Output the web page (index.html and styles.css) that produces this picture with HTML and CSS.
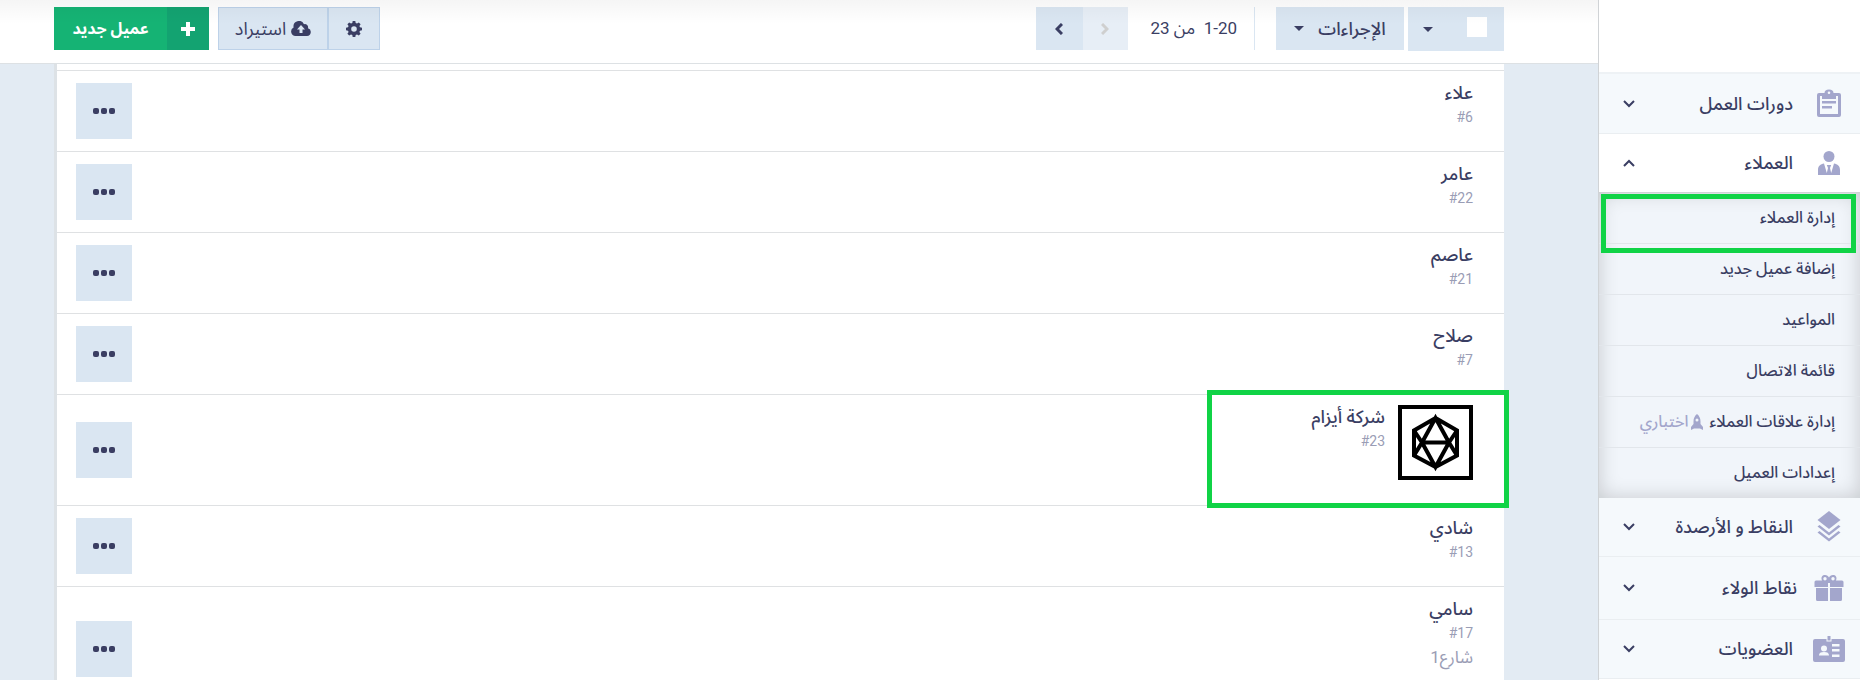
FILE: index.html
```
<!DOCTYPE html>
<html lang="ar" dir="rtl">
<head>
  <meta charset="UTF-8">
  <meta name="viewport" content="width=device-width, initial-scale=1">
  <title>إدارة العملاء</title>
  <link rel="stylesheet" href="styles.css">
</head>
<body>

  <div class="app">

    <nav class="sidebar">
      <a class="menu-item" href="#">
        <svg class="menu-icon" viewBox="0 0 32 32"><path fill-rule="evenodd" d="M6 5h5.500a4.500 3.600 0 0 1 9 0H26a2 2 0 0 1 2 2v20a2 2 0 0 1-2 2H6a2 2 0 0 1-2-2V7a2 2 0 0 1 2-2zm1 3v18h18V8h-2v3H9V8zm9-4.500a1.300 1.300 0 1 0 0 2.600 1.300 1.300 0 0 0 0-2.600zM9 13h14v2.500H9zm0 5h10v2.500H9z"/></svg>
        <span>دورات العمل</span>
        <svg class="chevron" viewBox="0 0 12 8"><path d="M1 1l5 5 5-5"/></svg>
      </a>
      <a class="menu-item open" href="#">
        <svg class="menu-icon" viewBox="0 0 32 32"><circle cx="16" cy="9.500" r="5.500"/><path d="M5 28v-5c0-4 2.500-6 6-6.500l2.800 9.500 1.200-5-1.200-3h4.400l-1.200 3 1.200 5 2.800-9.500c3.500.5 6 2.500 6 6.500v5z"/></svg>
        <span>العملاء</span>
        <svg class="chevron" viewBox="0 0 12 8"><path d="M1 7l5-5 5 5"/></svg>
      </a>
      <div class="submenu">
        <a class="highlight" href="#">إدارة العملاء</a>
        <a href="#">إضافة عميل جديد</a>
        <a href="#">المواعيد</a>
        <a href="#">قائمة الاتصال</a>
        <a href="#">إدارة علاقات العملاء
          <span class="beta"><svg viewBox="0 0 12 16"><path fill-rule="evenodd" d="M6 0c2.500 2 3.500 4.500 3.500 7.500V10l2.500 3v3l-3-1.500H3L0 16v-3l2.500-3V7.500C2.500 4.500 3.500 2 6 0zm0 4.500a1.500 1.500 0 1 0 0 3 1.500 1.500 0 0 0 0-3z"/></svg>اختباري</span>
        </a>
        <a href="#">إعدادات العميل</a>
      </div>
      <a class="menu-item" href="#">
        <svg class="menu-icon" viewBox="0 0 32 32"><path d="M16 0l11.500 9L16 18 4.500 9z"/><path d="M4.500 15.500l2-1.500 9.500 7.500 9.500-7.500 2 1.500L16 24.500z"/><path d="M4.500 21.500l2-1.500 9.500 7.500 9.500-7.500 2 1.500L16 30.500z"/></svg>
        <span>النقاط و الأرصدة</span>
        <svg class="chevron" viewBox="0 0 12 8"><path d="M1 1l5 5 5-5"/></svg>
      </a>
      <a class="menu-item tall" href="#">
        <svg class="menu-icon" viewBox="0 0 32 32"><path fill-rule="evenodd" d="M9 8.500C7.500 5 9.500 3 12 3c2 0 3.200 1 4 2.500C16.800 4 18 3 20 3c2.500 0 4.500 2 3 5.500h6a1.500 1.500 0 0 1 1.500 1.500v5h-29v-5A1.500 1.500 0 0 1 3 8.500zM12 5a1.700 1.700 0 1 0 0 3.400A1.700 1.700 0 0 0 12 5zm8 0a1.700 1.700 0 1 0 0 3.400A1.700 1.700 0 0 0 20 5z"/><path d="M3 16h12v13H4.500A1.500 1.500 0 0 1 3 27.500zM17 16h12v11.500a1.500 1.500 0 0 1-1.500 1.500H17z"/><path class="ribbon" d="M15 11h2v18h-2z"/></svg>
        <span>نقاط الولاء</span>
        <svg class="chevron" viewBox="0 0 12 8"><path d="M1 1l5 5 5-5"/></svg>
      </a>
      <a class="menu-item" href="#">
        <svg class="menu-icon" viewBox="0 0 32 32"><path fill-rule="evenodd" d="M2 6h11.500v2.500h5V6H30a2 2 0 0 1 2 2v19a2 2 0 0 1-2 2H2a2 2 0 0 1-2-2V8a2 2 0 0 1 2-2zm9 6.500a3 3 0 1 0 0 6 3 3 0 0 0 0-6zM6 22.500h10c0-2.500-1.500-3.500-5-3.500s-5 1-5 3.500zM19 11v2.500h7.500V11zm0 5v2.500h7.500V16zm0 5.500V24h7.500v-2.500z"/><path d="M14.500 3h3v4.500h-3z"/></svg>
        <span>العضويات</span>
        <svg class="chevron" viewBox="0 0 12 8"><path d="M1 1l5 5 5-5"/></svg>
      </a>
    </nav>

    <main class="main">
      <header class="toolbar">
        <div class="select-all">
          <input type="checkbox" aria-label="تحديد الكل">
          <button class="caret-btn" aria-label="خيارات التحديد"><span class="caret"></span></button>
        </div>
        <button class="btn actions">الإجراءات <span class="caret"></span></button>
        <div class="paging">
          <span class="range">1-20 &nbsp;من 23</span>
          <button class="page-btn prev" disabled aria-label="السابق"><svg viewBox="0 0 8 12"><path d="M1 1l5 5-5 5"/></svg></button>
          <button class="page-btn next" aria-label="التالي"><svg viewBox="0 0 8 12"><path d="M7 1L2 6l5 5"/></svg></button>
        </div>
        <div class="tools">
          <button class="btn settings" aria-label="الإعدادات"><svg viewBox="0 0 16 16"><path fill-rule="evenodd" d="M6.700 0h2.600l.4 2 1.300.6L12.800 1.400l1.800 1.800L13.400 5l.6 1.300 2 .4v2.600l-2 .4-.6 1.300 1.200 1.800-1.800 1.800-1.800-1.200-1.300.6-.4 2H6.700l-.4-2L5 13.400l-1.800 1.200-1.800-1.800L2.600 11 2 9.700l-2-.4V6.700l2-.4L2.600 5 1.400 3.200l1.800-1.800L5 2.600 6.300 2zM8 5.200a2.800 2.800 0 1 0 0 5.600 2.800 2.800 0 0 0 0-5.600z"/></svg></button>
          <button class="btn import"><svg viewBox="0 0 20 15"><path fill-rule="evenodd" d="M4.500 15A4.500 4.500 0 0 1 2.600 6.500 5.500 5.500 0 0 1 13 3.200a3.300 3.300 0 0 1 4 4A4 4 0 0 1 16 15zM8.500 12h3V8.500H14l-4-4.500-4 4.500h2.500z"/></svg>استيراد</button>
        </div>
        <button class="add-btn"><span class="plus"><svg viewBox="0 0 14 14"><path d="M5 0h4v5h5v4H9v5H5V9H0V5h5z"/></svg></span><span class="label">عميل جديد</span></button>
      </header>

      <section class="content">
        <ul class="clients">
          <li class="client">
            <div class="info"><a href="#">علاء</a><small dir="ltr">#6</small></div>
            <button class="more" aria-label="المزيد"><i></i><i></i><i></i></button>
          </li>
          <li class="client">
            <div class="info"><a href="#">عامر</a><small dir="ltr">#22</small></div>
            <button class="more" aria-label="المزيد"><i></i><i></i><i></i></button>
          </li>
          <li class="client">
            <div class="info"><a href="#">عاصم</a><small dir="ltr">#21</small></div>
            <button class="more" aria-label="المزيد"><i></i><i></i><i></i></button>
          </li>
          <li class="client">
            <div class="info"><a href="#">صلاح</a><small dir="ltr">#7</small></div>
            <button class="more" aria-label="المزيد"><i></i><i></i><i></i></button>
          </li>
          <li class="client company">
            <svg class="logo" viewBox="0 0 75 75"><rect x="2" y="2" width="71" height="71"/><path d="M37.500 13L59 25.500v25L37.500 62 16 50.500v-25zM37.500 13L24 37.500 37.500 62 51 37.500zM24 37.500h27M16 25.500l8 12-8 13M59 25.500l-8 12 8 13"/></svg>
            <div class="info"><a href="#">شركة أيزام</a><small dir="ltr">#23</small></div>
            <button class="more" aria-label="المزيد"><i></i><i></i><i></i></button>
          </li>
          <li class="client">
            <div class="info"><a href="#">شادي</a><small dir="ltr">#13</small></div>
            <button class="more" aria-label="المزيد"><i></i><i></i><i></i></button>
          </li>
          <li class="client with-address">
            <div class="info"><a href="#">سامي</a><small dir="ltr">#17</small><address>شارع1</address></div>
            <button class="more" aria-label="المزيد"><i></i><i></i><i></i></button>
          </li>
        </ul>
      </section>
    </main>

  </div>

</body>
</html>
```
FILE: styles.css
```
*,
*::before,
*::after {
  box-sizing: border-box;
}

body {
  margin: 0;
  font-family: Roboto, "Noto Sans Arabic", "Noto Sans", "DejaVu Sans", sans-serif;
  font-size: 18px;
  color: #3a3e63;
  background: #e3ebf3;
}

a {
  color: inherit;
  text-decoration: none;
}

button {
  font: inherit;
  color: inherit;
  border: 0;
  padding: 0;
  cursor: pointer;
}

svg {
  flex: none;
  fill: currentColor;
}

.app {
  display: flex;
  height: 100vh;
  overflow: hidden;
}

/* sidebar */
.sidebar {
  position: relative;
  z-index: 2;
  flex: none;
  width: 262px;
  padding-top: 72px;
  background: #fff;
  border-left: 1px solid #d0d3d6;
  font-weight: 500;
}

.menu-item {
  display: flex;
  align-items: center;
  gap: 20px;
  height: 59px;
  padding: 0 15px 0 24px;
  background: #f5f9fc;
  border-bottom: 1px solid #eaeef1;
}

.menu-item:first-child {
  height: 62px;
  border-top: 2px solid #eef2f5;
}

.menu-item.tall {
  height: 63px;
  gap: 16px;
}

.menu-item.open {
  background: #fff;
  border-bottom-color: #d0d3d6;
}

.menu-icon {
  width: 32px;
  height: 32px;
  color: #a3a6cc;
}

.ribbon {
  fill: #f5f9fc;
}

.chevron {
  width: 12px;
  height: 8px;
  margin-right: auto;
  fill: none;
  stroke: #3a3e63;
  stroke-width: 2;
}

.submenu {
  background: #f1f5fa;
  box-shadow: inset 0 0 20px rgba(0, 0, 0, 0.18);
}

.submenu a {
  position: relative;
  display: flex;
  align-items: center;
  height: 51px;
  padding-right: 25px;
  border-bottom: 1px solid #e2e6eb;
  font-size: 16px;
}

.submenu a:last-child {
  height: 50px;
  border-bottom: 0;
}

.beta {
  display: flex;
  align-items: center;
  margin-right: 7px;
  gap: 2px;
  color: #a3a6cc;
}

.beta svg {
  width: 12px;
  height: 16px;
}

.submenu .highlight::after {
  content: "";
  position: absolute;
  z-index: 1;
  inset: 1px 4px -10px 2px;
  border: 5px solid #10d346;
}

/* toolbar */
.main {
  flex: 1;
  min-width: 0;
  display: flex;
  flex-direction: column;
}

.toolbar {
  position: relative;
  display: flex;
  align-items: flex-start;
  height: 64px;
  padding: 7px 94px 0 54px;
  background: #fff;
  border-bottom: 1px solid #dde1e4;
}

.toolbar::before {
  content: "";
  position: absolute;
  inset: 0 0 auto;
  height: 24px;
  background: linear-gradient(rgba(0, 0, 0, 0.04), rgba(0, 0, 0, 0));
  pointer-events: none;
}

.select-all,
.btn,
.page-btn {
  display: flex;
  align-items: center;
  justify-content: center;
  height: 43px;
  background: #dae6f2;
}

.select-all {
  width: 96px;
  height: 44px;
  padding: 0 17px 0 5px;
  justify-content: space-between;
}

.select-all input {
  appearance: none;
  width: 20px;
  height: 20px;
  margin: 0 0 4px;
  background: #fff;
}

.caret-btn {
  padding: 10px;
  background: none;
}

.caret {
  display: block;
  border: 5px solid transparent;
  border-top-color: #3a3e63;
  border-bottom: 0;
}

.actions {
  width: 128px;
  margin-right: 4px;
  gap: 14px;
  font-weight: 500;
}

.paging {
  display: flex;
  align-items: center;
  height: 43px;
  margin-right: 21px;
  border-right: 1px solid #dae6f2;
}

.range {
  margin: 0 17px 0 23px;
  font-size: 17px;
}

.page-btn {
  width: 47px;
}

.page-btn svg {
  width: 8px;
  height: 12px;
  fill: none;
  stroke: currentColor;
  stroke-width: 3;
}

.page-btn.prev {
  width: 45px;
  color: #cfcfcf;
  background: #e7eef6;
}

.tools {
  display: flex;
  margin-right: auto;
}

.tools .btn {
  border: 1px solid #bdd2e9;
}

.settings {
  width: 52px;
}

.settings svg {
  width: 16px;
  height: 16px;
}

.import {
  width: 110px;
  gap: 5px;
}

.import svg {
  width: 20px;
  height: 15px;
}

.add-btn {
  display: flex;
  width: 155px;
  height: 43px;
  margin-right: 9px;
  background: #15b374;
  color: #fff;
  font-size: 16px;
  font-weight: bold;
}

.plus {
  display: flex;
  align-items: center;
  justify-content: center;
  width: 42px;
  height: 43px;
  background: #13a371;
}

.plus svg {
  width: 14px;
  height: 14px;
}

.add-btn .label {
  flex: 1;
  line-height: 43px;
}

/* clients list */
.content {
  flex: 1;
  min-height: 0;
  padding: 0 94px 0 54px;
}

.clients {
  list-style: none;
  margin: 0;
  padding: 6px 0 0;
  background: #fff;
  border-left: 3px solid #dde2e6;
}

.client {
  position: relative;
  display: flex;
  align-items: center;
  min-height: 81px;
  padding: 0 31px 0 19px;
  border-top: 1px solid #dfe1e3;
}

.info {
  align-self: flex-start;
  display: flex;
  flex-direction: column;
  align-items: flex-start;
  padding-top: 10px;
  line-height: 24px;
}

.info a {
  font-weight: 500;
}

.info small {
  font-size: 14px;
  color: #9a9db5;
}

.info address {
  font-style: normal;
  font-size: 17px;
  color: #9a9db5;
}

.more {
  display: flex;
  align-items: center;
  justify-content: center;
  gap: 2px;
  width: 56px;
  height: 56px;
  margin-right: auto;
  background: #dae6f2;
}

.more i {
  width: 6px;
  height: 6px;
  border-radius: 2px;
  background: #3a3e63;
}

.company {
  min-height: 111px;
}

.company::after {
  content: "";
  position: absolute;
  z-index: 1;
  inset: -5px -5px -3px auto;
  width: 302px;
  border: 5px solid #10d346;
}

.logo {
  align-self: flex-start;
  width: 75px;
  height: 75px;
  margin: 10px 0 0 13px;
  fill: none;
  stroke: #000;
  stroke-width: 4;
}

.with-address {
  min-height: 125px;
}
```
